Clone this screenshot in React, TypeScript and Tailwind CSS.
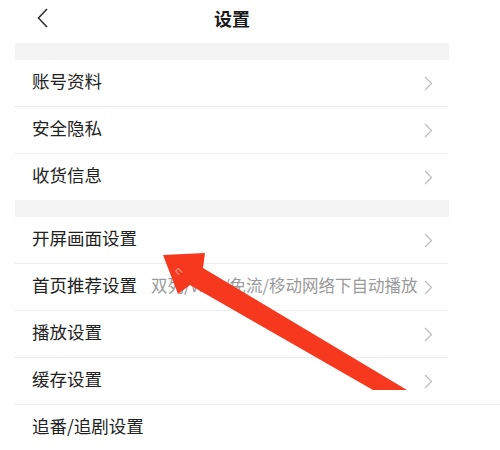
const FONT = { fontFamily: '"Noto Sans CJK SC", "Noto Sans", sans-serif' };

type Row = { label: string; hint?: string; arrow?: boolean; wide?: boolean };

const GROUP_A: Row[] = [
  { label: "账号资料", arrow: true },
  { label: "安全隐私", arrow: true },
  { label: "收货信息", arrow: true },
];

const GROUP_B: Row[] = [
  { label: "开屏画面设置", arrow: true },
  { label: "首页推荐设置", hint: "双列/WiFi/免流/移动网络下自动播放", arrow: true },
  { label: "播放设置", arrow: true },
  { label: "缓存设置", arrow: true, wide: true },
  { label: "追番/追剧设置", wide: true },
];

function Chevron() {
  return (
    <svg width="9" height="15" viewBox="0 0 9 15" className="shrink-0">
      <path d="M1 1 L7.5 7.5 L1 14" fill="none" stroke="#bdbdbd" strokeWidth="1.2" />
    </svg>
  );
}

function SettingRow({ row, last }: { row: Row; last?: boolean }) {
  return (
    <div className="relative">
      <div className="flex h-[46px] items-center pb-[4px] pl-[17px] pr-[16px] leading-none">
        <span className="shrink-0 text-[17.5px] text-[#222]">{row.label}</span>
        {row.hint && (
          <span className="ml-[14px] whitespace-nowrap text-[16.5px] text-[#9a9a9a]">
            {row.hint}
          </span>
        )}
        <span className="ml-auto pl-[4px] pt-[4px]">{row.arrow && <Chevron />}</span>
      </div>
      {!last && (
        <div className={row.wide ? "h-px w-[485px] bg-[#ececec]" : "h-px w-[433px] bg-[#ececec]"} />
      )}
    </div>
  );
}

export default function App() {
  return (
    <div className="relative h-[450px] w-[500px] overflow-hidden bg-white" style={FONT}>
      <div className="ml-[15px] w-[434px]">
        {/* Header */}
        <div className="relative flex h-[43px] items-center justify-center pb-[7px] leading-none">
          <svg
            width="12"
            height="20"
            viewBox="0 0 12 20"
            className="absolute left-[22px] top-[8px]"
          >
            <path d="M10 1 L1.5 10 L10 19" fill="none" stroke="#333" strokeWidth="1.6" />
          </svg>
          <span className="text-[18px] font-bold text-[#1a1a1a]">设置</span>
        </div>

        <div className="h-[17px] bg-[#f3f3f3]" />
        {GROUP_A.map((r, i) => (
          <SettingRow key={r.label} row={r} last={i === GROUP_A.length - 1} />
        ))}

        <div className="h-[17px] bg-[#f3f3f3]" />
        {GROUP_B.map((r) => (
          <SettingRow key={r.label} row={r} />
        ))}
      </div>

      {/* Red annotation arrow */}
      <svg
        className="pointer-events-none absolute left-0 top-0"
        width="500"
        height="450"
        viewBox="0 0 500 450"
      >
        <polygon
          points="163,255 205,253 203,268 407,390 373,390 190,285 178,294"
          fill="#f5381e"
        />
        <text
          x="178"
          y="276"
          fontSize="11"
          fill="#f7a08f"
          transform="rotate(-40 178 276)"
          style={FONT}
        >
          n
        </text>
      </svg>
    </div>
  );
}
